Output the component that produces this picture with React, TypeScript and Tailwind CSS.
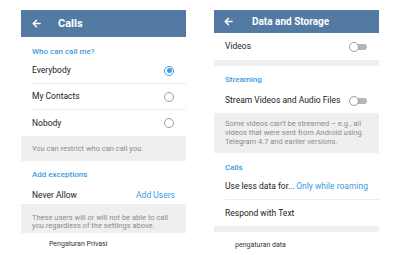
import React from "react";

const Arrow = () => (
  <svg width="9" height="9" viewBox="0 0 10 10" fill="none" stroke="white" strokeWidth="1.6" strokeLinecap="round" strokeLinejoin="round">
    <path d="M9 5H1.5M5 1.3L1.3 5L5 8.7" />
  </svg>
);

const Radio = ({ on }: { on?: boolean }) =>
  on ? (
    <div className="w-[10px] h-[10px] rounded-full border-[1.3px] border-[#3d9be0] flex items-center justify-center">
      <div className="w-[5px] h-[5px] rounded-full bg-[#3d9be0]" />
    </div>
  ) : (
    <div className="w-[10px] h-[10px] rounded-full border-[1.3px] border-[#9e9e9e]" />
  );

const Toggle = () => (
  <div className="relative w-[18px] h-[10px] flex items-center">
    <div className="absolute left-[2px] right-0 h-[6px] rounded-full bg-[#b5b5b5]" />
    <div className="absolute left-0 w-[10px] h-[10px] rounded-full bg-white border border-[#9e9e9e]" />
  </div>
);

export default function App() {
  return (
    <div className="w-[400px] h-[255px] bg-white flex pl-[21px] gap-[28px] pt-[10px] overflow-hidden" style={{ fontFamily: "Roboto, 'Liberation Sans', sans-serif" }}>
      {/* Left panel */}
      <div className="w-[165px] flex flex-col">
        <div className="h-[27px] bg-[#527aa2] flex items-center pl-[11px]">
          <Arrow />
          <span className="ml-[17px] text-white text-[11px] font-bold leading-none">Calls</span>
        </div>
        <div className="h-[21px] pl-[11px] pt-[10px] text-[8px] leading-[10px] font-medium text-[#3d9be0]">Who can call me?</div>
        <div className="ml-[11px] h-[26px] flex items-center justify-between pr-[12px] border-b border-[#ececec] text-[8.5px] text-[#222]">
          <span>Everybody</span>
          <Radio on />
        </div>
        <div className="ml-[11px] h-[26px] flex items-center justify-between pr-[12px] border-b border-[#ececec] text-[8.5px] text-[#222]">
          <span>My Contacts</span>
          <Radio />
        </div>
        <div className="ml-[11px] h-[26px] flex items-center justify-between pr-[12px] text-[8.5px] text-[#222]">
          <span>Nobody</span>
          <Radio />
        </div>
        <div className="h-[25px] bg-[#efefef] pl-[11px] flex items-center text-[7.5px] text-[#8c8c8c]">You can restrict who can call you.</div>
        <div className="h-[25px] pl-[11px] pt-[9px] text-[8px] leading-[10px] font-medium text-[#3d9be0]">Add exceptions</div>
        <div className="h-[18px] pl-[11px] pr-[11px] flex items-center justify-between text-[8.5px]">
          <span className="text-[#222]">Never Allow</span>
          <span className="text-[#3d9be0]">Add Users</span>
        </div>
        <div className="h-[29px] bg-[#efefef] pl-[11px] pt-[10px] text-[7.5px] leading-[8px] text-[#8c8c8c]">
          <div>These users will or will not be able to call</div>
          <div>you regardless of the settings above.</div>
        </div>
        <div className="h-[22px] pl-[28px] flex items-center text-[7px] text-[#333]">Pengaturan Privasi</div>
      </div>

      {/* Right panel */}
      <div className="w-[165px] flex flex-col">
        <div className="h-[23px] bg-[#527aa2] flex items-center pl-[10px]">
          <Arrow />
          <span className="ml-[19px] text-white text-[10px] font-bold leading-none">Data and Storage</span>
        </div>
        <div className="h-[27px] pl-[11px] pr-[12px] flex items-center justify-between text-[8.5px] text-[#222]">
          <span>Videos</span>
          <Toggle />
        </div>
        <div className="h-[6px] bg-[#efefef]" />
        <div className="h-[22px] pl-[11px] pt-[9px] text-[8px] leading-[10px] font-medium text-[#3d9be0]">Streaming</div>
        <div className="h-[25px] pl-[11px] pr-[12px] flex items-center justify-between text-[8.5px] text-[#222]">
          <span>Stream Videos and Audio Files</span>
          <Toggle />
        </div>
        <div className="h-[40px] bg-[#efefef] pl-[11px] pt-[6px] text-[7.5px] leading-[9px] text-[#8c8c8c]">
          <div>Some videos can’t be streamed – e.g., all</div>
          <div>videos that were sent from Android using</div>
          <div>Telegram 4.7 and earlier versions.</div>
        </div>
        <div className="h-[23px] pl-[11px] pt-[10px] text-[8px] leading-[10px] font-medium text-[#3d9be0]">Calls</div>
        <div className="ml-[11px] h-[24px] pr-[11px] pb-[2px] flex items-center justify-between border-b border-[#ececec] text-[8.5px]">
          <span className="text-[#222]">Use less data for...</span>
          <span className="text-[#3d9be0]">Only while roaming</span>
        </div>
        <div className="h-[26px] pl-[11px] flex items-center text-[8.5px] text-[#222]">Respond with Text</div>
        <div className="h-[6px] bg-[#efefef]" />
        <div className="h-[23px] pl-[21px] pt-[3px] flex items-center text-[7px] text-[#333]">pengaturan data</div>
      </div>
    </div>
  );
}
